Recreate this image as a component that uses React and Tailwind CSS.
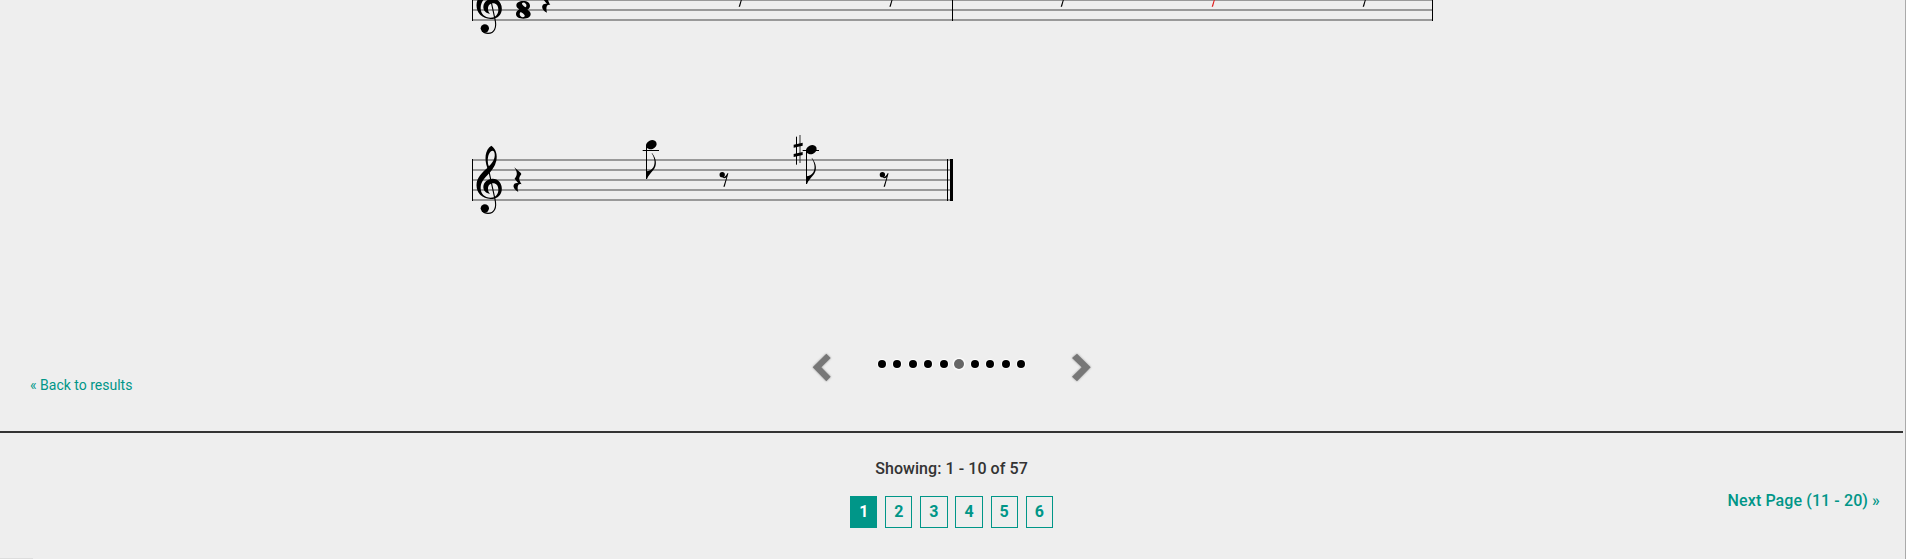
import React from "react";

const CLEF =
  "M82 114 C73 88 74 60 94 47 C107 55 113 74 109 92 C105 110 95 122 82 136 C70 149 62 158 62 174 C62 191 73 203 92 203 C106 203 115 193 115 179 C115 167 109 160 99 160 C90 160 84 167 84 176 C84 183 86 187 90 191 C78 190 70 182 70 171 C70 157 82 146 98 146 C115 146 125.500 160 125.500 176 C125.500 194 112 207 92 207 C67 206 49.500 190 49.500 166 C49.500 142 68 126 82 114 Z M86 109 C97 100 106 85 104 71 C103 62 98 60 93 64 C83 73 81 91 86 109 Z";

function Clef({ y }) {
  return (
    <g transform={`translate(460 ${y - 29}) scale(0.33333)`}>
      <path d={CLEF} fillRule="evenodd" />
      <path d="M83 106 L105 208 C111 233 103 250 84 250 C76 250 70 247 66 242" fill="none" stroke="#000" strokeWidth="3.4" />
      <circle cx="74.5" cy="235" r="12.5" />
    </g>
  );
}

function QuarterRest({ x, y }) {
  return (
    <path
      transform={`translate(${x} ${y}) scale(0.33333)`}
      d="M2 0 L21 16 C24 19 23 21 21 24 C15 33 16 37 24 51 C13 48 10 58 14 74 C3 68 -2 60 0 54 C2 48 8 46 14 48 L3 34 C11 25 13 16 2 0 Z"
    />
  );
}

function EighthRest({ x, y, fill = "#000" }) {
  return (
    <g transform={`translate(${x} ${y}) scale(0.33333)`} fill={fill}>
      <circle cx="7.5" cy="8" r="8" />
      <path d="M8 16 C15 17 20 11 23 4 L26 4 L15 44 L11 44 L20 16 C16 19 12 20 7 16 Z" />
    </g>
  );
}

function EighthNote({ x, y, ledger }) {
  return (
    <g transform={`translate(${x} ${y}) scale(0.33333)`}>
      <ellipse cx="16" cy="14" rx="16.5" ry="13" transform="rotate(-24 16 14)" />
      <rect x="0" y="14" width="3" height="103" />
      <rect x="-10" y={ledger} width="49" height="3" />
      <path d="M18 39 C32 56 34 76 22 90 C14 100 7 106 3 117 L1 117 L1 94 C9 94 17 90 22 82 C29 70 26 54 17 40 Z" />
    </g>
  );
}

function StaffLines({ x, width, ys }) {
  return ys.map((y) => <rect key={y} x={x} y={y} width={width} height="2" fill="#999" />);
}

function Score() {
  return (
    <svg className="block h-[230px] w-[970px]" viewBox="470 0 970 230">
      <StaffLines x={472} width={960} ys={[-1, 9, 19]} />
      <rect x="472" y="0" width="1" height="21" />
      <rect x="952" y="0" width="1" height="21" />
      <rect x="1432" y="0" width="1" height="21" />
      <Clef y={-21} />
      <path
        transform="translate(460 0) scale(0.33333)"
        fillRule="evenodd"
        d="M190 3 C202 3 210 9 210 17 C210 23 207 26 202 29 C209 33 212 37 212 42 C212 51 203 56 190 56 C177 56 168 51 168 42 C168 36 172 32 178 28 C172 25 169 21 169 16 C169 8 178 3 190 3 Z M197 22 C200 19 200 14 197 11 C194 7 188 7 186 10 C185 14 191 19 197 22 Z M182 36 C178 39 178 45 182 49 C186 53 192 52 194 49 C196 45 189 40 182 36 Z"
      />
      <QuarterRest x={542.3} y={-12} />
      <EighthRest x={735} y={-8} />
      <EighthRest x={885.7} y={-8} />
      <EighthRest x={1057} y={-8} />
      <EighthRest x={1208} y={-8} fill="#e01b1b" />
      <EighthRest x={1359} y={-8} />

      <StaffLines x={472} width={478} ys={[159, 169, 179, 189, 199]} />
      <rect x="472" y="159" width="1" height="42" />
      <rect x="947" y="159" width="1" height="42" />
      <rect x="950" y="159" width="3" height="42" />
      <Clef y={159} />
      <QuarterRest x={513.6} y={167.3} />
      <EighthNote x={646} y={140} ledger={30} />
      <EighthRest x={719.7} y={172} />
      <g transform="translate(700 130) scale(0.33333)">
        <rect x="288" y="20" width="3" height="84" />
        <rect x="298.5" y="15" width="3" height="84" fill="#333" />
        <path d="M281 44 L308 38 V47 L281 53 Z M281 72 L308 66 V75 L281 81 Z" />
      </g>
      <EighthNote x={806} y={145} ledger={15} />
      <EighthRest x={879.9} y={172} />
    </svg>
  );
}

function Chevron({ points }) {
  return (
    <svg className="block h-8 w-6 drop-shadow-[0_0_1px_rgba(0,0,0,0.35)]" viewBox="0 0 24 32">
      <polygon points={points} fill="#777" />
    </svg>
  );
}

const pages = [1, 2, 3, 4, 5, 6];

export default function App() {
  return (
    <div className="flex h-[559px] w-full overflow-hidden bg-[#eee] font-[Roboto,sans-serif] text-[#333]">
      <div className="flex flex-1 flex-col">
        <div className="flex h-[350px] pl-[470px]">
          <Score />
        </div>
        <div className="flex h-[81px] items-start">
          <a className="mt-[25px] w-[779px] pl-[30px] text-[14px] leading-5 text-[#009688]">« Back to results</a>
          <div className="ml-[30px] flex w-[288px] items-start">
            <Chevron points="3.7,17.3 17.3,3.7 21.7,8 12.3,17.3 21.7,26.7 17.3,31.3" />
            <div className="ml-[45px] mt-[10px] flex gap-[7.44px]">
              {Array.from({ length: 10 }, (_, i) => (
                <span
                  key={i}
                  className={
                    i === 5
                      ? "size-2 scale-125 rounded-full bg-[#666] shadow-[0_0_1px_1px_#fff]"
                      : "size-2 rounded-full bg-black shadow-[0_0_1px_1px_#fff]"
                  }
                />
              ))}
            </div>
            <div className="ml-[44px]">
              <Chevron points="21.7,17.3 8,3.7 3,8 12.7,17.3 3,26.7 8,31.3" />
            </div>
          </div>
        </div>
        <div className="mr-[2px] h-[2px] bg-[#333]" />
        <div className="flex h-[125px]">
          <div className="w-[635px]" />
          <div className="flex w-[633px] flex-col items-center pt-[24px]">
            <div className="text-[16px] font-medium leading-6 tracking-[0.06px] whitespace-nowrap">Showing: 1 - 10 of 57</div>
            <div className="mt-[15px] flex gap-[7.82px]">
              {pages.map((n) => (
                <a
                  key={n}
                  className={
                    n === 1
                      ? "flex h-8 w-[27.3px] items-center justify-center border border-[#009688] bg-[#009688] text-[16px] font-bold text-white"
                      : "flex h-8 w-[27.3px] items-center justify-center border border-[#009688] text-[16px] font-bold text-[#009688]"
                  }
                >
                  {n}
                </a>
              ))}
            </div>
          </div>
          <a className="flex-1 pr-[25px] pt-[56px] text-right text-[16px] font-medium leading-6 tracking-[0.1px] text-[#009688]">Next Page (11 - 20) »</a>
        </div>
        <div className="h-px w-[33px] bg-[#ddd]" />
      </div>
      <div className="w-px bg-[#aaa]" />
    </div>
  );
}
